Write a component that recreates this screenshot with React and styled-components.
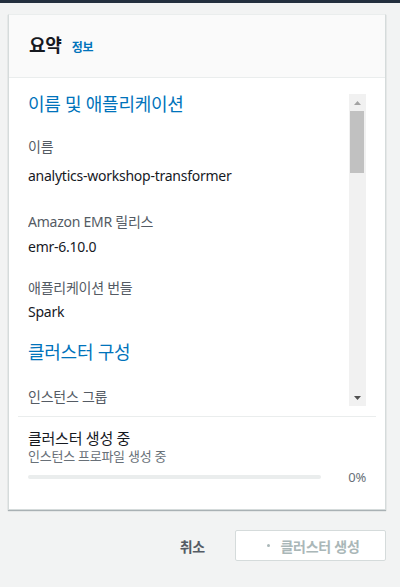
import React from 'react';
import styled, { createGlobalStyle } from 'styled-components';

const GlobalStyle = createGlobalStyle`
  html, body {
    margin: 0;
    padding: 0;
    background: #f2f3f3;
  }
  body {
    font-family: "Noto Sans", "Noto Sans CJK KR", sans-serif;
    letter-spacing: -0.25px;
    color: #16191f;
  }
  * {
    box-sizing: border-box;
  }
`;

const fields = [
  {
    title: '이름 및 애플리케이션',
    items: [
      { label: '이름', value: 'analytics-workshop-transformer', top: 21, gap: 9 },
      { label: 'Amazon EMR 릴리스', value: 'emr-6.10.0', top: 26, gap: 5 },
      { label: '애플리케이션 번들', value: 'Spark', top: 21, gap: 4 },
    ],
  },
  {
    title: '클러스터 구성',
    top: 18,
    items: [{ label: '인스턴스 그룹', top: 23 }],
  },
];

const App = () => {
  const progress = 0;

  return (
    <>
      <GlobalStyle />
      <TopBar />
      <Page>
        <Card>
          <CardHeader>
            <Title>요약</Title>
            <InfoLink>정보</InfoLink>
          </CardHeader>

          <CardBody>
            <ScrollBox>
              <ScrollContent>
                {fields.map((section) => (
                  <Section key={section.title} $top={section.top || 0}>
                    <SectionTitle>{section.title}</SectionTitle>
                    {section.items.map((item) => (
                      <Field key={item.label} $top={item.top}>
                        <Label>{item.label}</Label>
                        {item.value && <Value $top={item.gap}>{item.value}</Value>}
                      </Field>
                    ))}
                  </Section>
                ))}
              </ScrollContent>

              <Scrollbar>
                <ScrollArrow>
                  <svg width="7" height="4" viewBox="0 0 7 4">
                    <path d="M3.5 0L7 4H0z" fill="#a3a3a3" />
                  </svg>
                </ScrollArrow>
                <Track>
                  <Thumb />
                </Track>
                <ScrollArrow>
                  <svg width="7" height="4" viewBox="0 0 7 4">
                    <path d="M0 0h7L3.5 4z" fill="#505050" />
                  </svg>
                </ScrollArrow>
              </Scrollbar>
            </ScrollBox>
          </CardBody>

          <Divider />

          <Status>
            <StatusTitle>클러스터 생성 중</StatusTitle>
            <StatusText>인스턴스 프로파일 생성 중</StatusText>
            <ProgressRow>
              <ProgressTrack>
                <ProgressFill style={{ width: `${progress}%` }} />
              </ProgressTrack>
              <ProgressValue>{progress}%</ProgressValue>
            </ProgressRow>
          </Status>
        </Card>

        <Actions>
          <CancelButton type="button">취소</CancelButton>
          <CreateButton type="button" disabled>
            <Spinner />
            클러스터 생성
          </CreateButton>
        </Actions>
      </Page>
    </>
  );
};

const TopBar = styled.div`
  height: 3px;
  background: #232f3e;
`;

const Page = styled.div`
  padding: 11px 14px 0 8px;
`;

const Card = styled.div`
  width: 378px;
  background: #ffffff;
  border: 1px solid #d5dbdb;
  border-top-color: #eaeded;
  box-shadow: 0 1px 1px 0 rgba(0, 28, 36, 0.3);
`;

const CardHeader = styled.div`
  height: 63px;
  display: flex;
  align-items: baseline;
  padding: 17px 20px 0;
  background: #fafafa;
  border-bottom: 1px solid #eaeded;
`;

const Title = styled.h2`
  margin: 0;
  font-size: 18px;
  line-height: 26px;
  font-weight: 700;
  color: #16191f;
`;

const InfoLink = styled.a`
  margin-left: 10px;
  font-size: 12px;
  font-weight: 700;
  color: #0073bb;
  cursor: pointer;
`;

const CardBody = styled.div`
  padding: 14px 19px 10px 19px;
`;

const ScrollBox = styled.div`
  height: 314px;
  display: flex;
`;

const ScrollContent = styled.div`
  flex: 1;
  overflow: hidden;
`;

const Section = styled.section`
  margin-top: ${(p) => p.$top}px;
`;

const SectionTitle = styled.h3`
  margin: 0;
  font-size: 18px;
  line-height: 24px;
  font-weight: 400;
  color: #0073bb;
`;

const Field = styled.div`
  margin-top: ${(p) => p.$top}px;
`;

const Label = styled.div`
  font-size: 14px;
  line-height: 20px;
  color: #545b64;
`;

const Value = styled.div`
  margin-top: ${(p) => p.$top}px;
  font-size: 14px;
  line-height: 20px;
  color: #16191f;
`;

const Scrollbar = styled.div`
  width: 17px;
  margin-top: 2px;
  display: flex;
  flex-direction: column;
  background: #f1f1f1;
`;

const ScrollArrow = styled.div`
  height: 17px;
  display: flex;
  align-items: center;
  justify-content: center;
`;

const Track = styled.div`
  flex: 1;
  padding: 0 2px 0 1px;
`;

const Thumb = styled.div`
  height: 62px;
  background: #c1c1c1;
`;

const Divider = styled.div`
  height: 1px;
  margin: 0 9px;
  background: #eaeded;
`;

const Status = styled.div`
  padding: 11px 19px 22px;
`;

const StatusTitle = styled.div`
  font-size: 15px;
  line-height: 20px;
  color: #16191f;
`;

const StatusText = styled.div`
  font-size: 13px;
  line-height: 16px;
  color: #687078;
`;

const ProgressRow = styled.div`
  display: flex;
  align-items: center;
  margin-top: 3px;
  height: 20px;
`;

const ProgressTrack = styled.div`
  width: 293px;
  height: 4px;
  background: #eaeded;
  border-radius: 2px;
  overflow: hidden;
`;

const ProgressFill = styled.div`
  height: 100%;
  background: #0073bb;
`;

const ProgressValue = styled.div`
  flex: 1;
  text-align: right;
  font-size: 13px;
  color: #687078;
`;

const Actions = styled.div`
  width: 378px;
  display: flex;
  justify-content: flex-end;
  align-items: center;
  gap: 30px;
  margin-top: 20px;
`;

const CancelButton = styled.button`
  border: none;
  background: none;
  padding: 0;
  font-family: inherit;
  letter-spacing: inherit;
  font-size: 14px;
  font-weight: 700;
  color: #545b64;
  cursor: pointer;
`;

const CreateButton = styled.button`
  width: 151px;
  height: 31px;
  display: flex;
  align-items: center;
  justify-content: center;
  gap: 10px;
  padding: 0 0 0 6px;
  background: #ffffff;
  border: 1px solid #d5dbdb;
  border-radius: 2px;
  font-family: inherit;
  letter-spacing: inherit;
  font-size: 14px;
  font-weight: 700;
  color: #aab7b8;
`;

const Spinner = styled.span`
  width: 3px;
  height: 3px;
  border-radius: 50%;
  background: #aab7b8;
`;

export default App;
